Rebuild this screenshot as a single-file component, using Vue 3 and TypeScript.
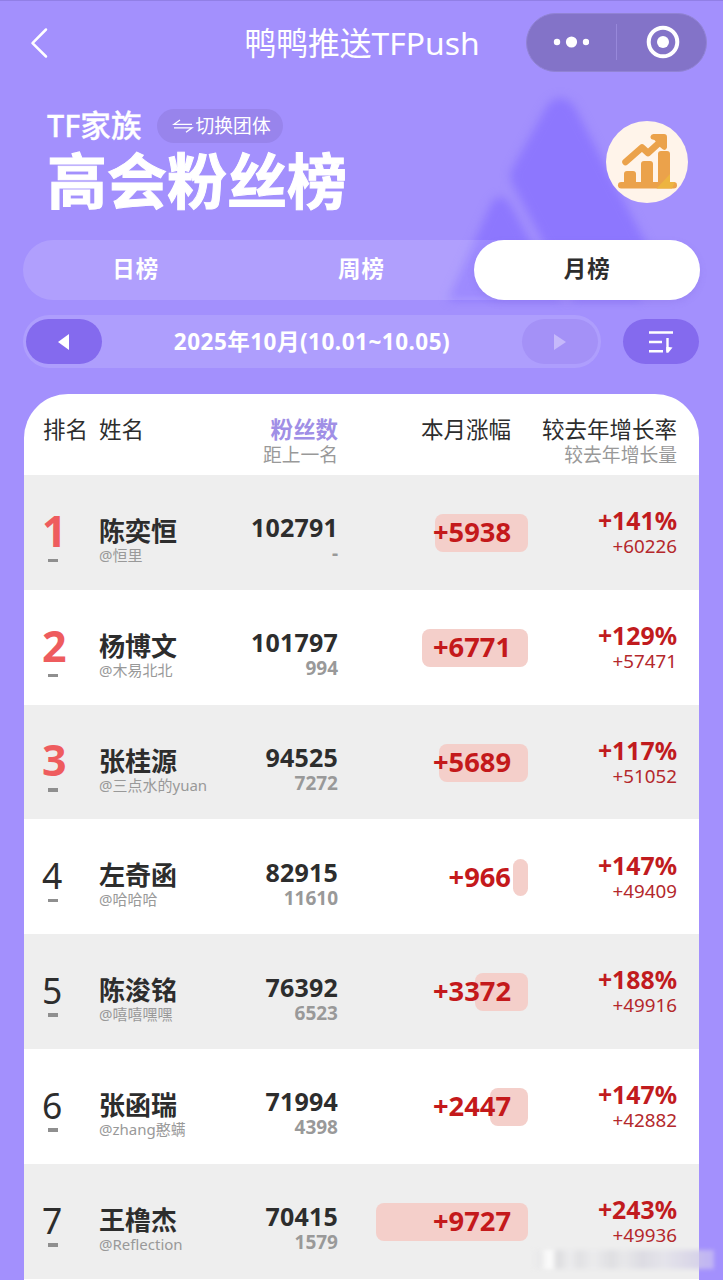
<script setup lang="ts">
interface Row {
  rank: number
  name: string
  handle: string
  fans: number
  gap: string
  growth: number
  rate: number
  delta: number
}

const rows: Row[] = [
  { rank: 1, name: '陈奕恒', handle: '@恒里', fans: 102791, gap: '-', growth: 5938, rate: 141, delta: 60226 },
  { rank: 2, name: '杨博文', handle: '@木易北北', fans: 101797, gap: '994', growth: 6771, rate: 129, delta: 57471 },
  { rank: 3, name: '张桂源', handle: '@三点水的yuan', fans: 94525, gap: '7272', growth: 5689, rate: 117, delta: 51052 },
  { rank: 4, name: '左奇函', handle: '@哈哈哈', fans: 82915, gap: '11610', growth: 966, rate: 147, delta: 49409 },
  { rank: 5, name: '陈浚铭', handle: '@嘻嘻嘿嘿', fans: 76392, gap: '6523', growth: 3372, rate: 188, delta: 49916 },
  { rank: 6, name: '张函瑞', handle: '@zhang憨螨', fans: 71994, gap: '4398', growth: 2447, rate: 147, delta: 42882 },
  { rank: 7, name: '王橹杰', handle: '@Reflection', fans: 70415, gap: '1579', growth: 9727, rate: 243, delta: 49936 },
]

const tabs = ['日榜', '周榜', '月榜']
const activeTab = '月榜'

const FULL_BAR = 152.5
const maxGrowth = Math.max(...rows.map((r) => r.growth))
const barWidth = (growth: number): string => `${((growth / maxGrowth) * FULL_BAR).toFixed(1)}px`
</script>

<template>
  <div class="page">
    <svg class="backdrop" viewBox="0 0 723 400" width="723" height="400">
      <g class="peaks">
        <path d="M547 106Q560 90 574 106L656 262L640 300H574L512 183Q509 176 512 169Z" />
        <path d="M491 204Q500 190 510 204L562 300H448Z" />
      </g>
    </svg>

    <header class="nav">
      <svg class="back" viewBox="0 0 20 32" width="20" height="32">
        <path d="M17 2.5L3.5 16.2L17 29.5" />
      </svg>
      <span class="nav-title">鸭鸭推送TFPush</span>
      <div class="capsule">
        <svg class="dots" viewBox="0 0 36 12" width="36" height="12">
          <circle cx="4" cy="6" r="3.2" /><circle cx="18.5" cy="6" r="5.6" /><circle cx="33" cy="6" r="3.2" />
        </svg>
        <i class="split"></i>
        <svg class="target" viewBox="0 0 34 34" width="34" height="34">
          <circle cx="17" cy="17" r="14.3" class="ring" /><circle cx="17" cy="17" r="6" class="dot" />
        </svg>
      </div>
    </header>

    <section class="hero">
      <div class="hero-text">
        <div class="group-line">
          <span class="group">TF家族</span>
          <span class="switch">
            <svg viewBox="0 0 22 16" width="22" height="16"><path d="M8 2L2 6.3H20M2 9.8H20L14 14.3" /></svg>
            切换团体
          </span>
        </div>
        <h1>高会粉丝榜</h1>
      </div>
      <div class="chart-badge">
        <svg viewBox="0 0 82 82" width="82" height="82">
          <path class="line" d="M19.5 41L36 26.5L42 32L53 22" />
          <path class="head" d="M47.5 13H58Q61 13 61 16V26.5Q60 30 57 28.5L54 26L48.5 19Q44 18.5 44.5 15.5Q45 13 47.5 13Z" />
          <rect x="18" y="50" width="12" height="16" rx="3" />
          <rect x="35" y="40" width="12" height="26" rx="3" />
          <rect x="52" y="30" width="12" height="36" rx="3" />
          <rect x="12" y="61" width="59" height="6.5" rx="3.2" />
          <path class="glow" d="M50.5 67.5L64 53V61H69L66 67.5Z" />
        </svg>
      </div>
    </section>

    <nav class="tabs">
      <span v-for="tab in tabs" :key="tab" class="tab" :class="{ active: tab === activeTab }">{{ tab }}</span>
    </nav>

    <div class="period-line">
      <div class="period">
        <span class="pill">
          <svg viewBox="0 0 16 20" width="16" height="20"><path d="M2 10L13 2V18Z" /></svg>
        </span>
        <span class="range">2025年10月(10.01~10.05)</span>
        <span class="pill disabled">
          <svg viewBox="0 0 16 20" width="16" height="20"><path d="M14 10L2 2V18Z" /></svg>
        </span>
      </div>
      <span class="pill sort">
        <svg viewBox="0 0 26 24" width="26" height="24">
          <path d="M1 2.5H25M1 12H14M1 21.2H15M19.5 8V21.5" />
          <path class="hook" d="M18.3 22.7V17H20.7L24.5 17.5L20.3 22.7Z" />
        </svg>
      </span>
    </div>

    <main class="card">
      <div class="thead">
        <div>排名</div>
        <div>姓名</div>
        <div class="right"><b class="sorted">粉丝数</b><small>距上一名</small></div>
        <div class="right growth-head">本月涨幅</div>
        <div class="right">较去年增长率<small>较去年增长量</small></div>
      </div>
      <div v-for="row in rows" :key="row.rank" class="row">
        <div class="rank" :class="{ top: row.rank <= 3 }">
          <span>{{ row.rank }}</span><i></i>
        </div>
        <div class="who">
          <div class="name">{{ row.name }}</div>
          <div class="handle">{{ row.handle }}</div>
        </div>
        <div class="fans">
          <div class="count">{{ row.fans }}</div>
          <div class="gap">{{ row.gap }}</div>
        </div>
        <div class="growth">
          <i class="bar" :style="{ width: barWidth(row.growth) }"></i>
          <span>+{{ row.growth }}</span>
        </div>
        <div class="yoy">
          <div class="rate">+{{ row.rate }}%</div>
          <div class="delta">+{{ row.delta }}</div>
        </div>
      </div>
      <div class="marks">
        <span class="mark first">微信公众号:鸭鸭推送TFPush</span>
        <div class="mark-clip"><span class="mark">微信公众号:鸭鸭推送TFPush</span></div>
      </div>
    </main>
    <div class="smear"></div>
  </div>
</template>

<style>
html,
body {
  margin: 0;
  overflow: hidden;
}
</style>

<style scoped>
.page {
  position: relative;
  box-sizing: border-box;
  width: 723px;
  height: 1280px;
  overflow: hidden;
  background: #a390fd;
  border-top: 1px solid #917fe6;
  color: #fff;
  font-family: 'Noto Sans', 'Noto Sans CJK SC', sans-serif;
  white-space: nowrap;
}
.page > * {
  position: relative;
}
.page > .backdrop {
  position: absolute;
  left: 0;
  top: -1px;
}
.peaks {
  fill: #8d77fe;
  filter: blur(5px);
}
svg {
  display: block;
  flex: none;
}

.nav {
  display: grid;
  grid-template-columns: 198px 1fr 197px;
  align-items: center;
  height: 83px;
}
.back {
  margin-left: 29px;
  fill: none;
  stroke: #fff;
  stroke-width: 2.5;
  stroke-linecap: round;
  stroke-linejoin: round;
}
.nav-title {
  justify-self: center;
  margin-top: 1px;
  font-size: 31.8px;
  line-height: 44px;
  font-weight: 400;
}
.capsule {
  display: flex;
  align-items: center;
  box-sizing: border-box;
  width: 181px;
  height: 59px;
  margin-top: -1px;
  padding-left: 26px;
  border: 1px solid #9183d4;
  border-radius: 30px;
  background: #8373c8;
  fill: #fff;
}
.split {
  width: 1px;
  height: 36px;
  margin: 0 29px 0 27px;
  background: #9788da;
}
.ring {
  fill: none;
  stroke: #fff;
  stroke-width: 4;
}

.hero {
  display: flex;
  justify-content: space-between;
  height: 155px;
  padding: 22px 35px 0 47px;
  box-sizing: border-box;
}
.group-line {
  display: flex;
  align-items: center;
  gap: 15px;
  height: 38px;
}
.group {
  font-size: 30.6px;
  font-weight: 500;
  line-height: 38px;
  -webkit-text-stroke: 0.3px #fff;
}
.switch {
  display: flex;
  align-items: center;
  gap: 2px;
  box-sizing: border-box;
  width: 126px;
  height: 34px;
  margin-top: 1px;
  padding-left: 15px;
  border-radius: 17px;
  background: #9884ec;
  font-size: 18.8px;
  line-height: 34px;
}
.switch svg {
  fill: none;
  stroke: #fff;
  stroke-width: 1.3;
}
h1 {
  margin: -1px 0 0;
  font-size: 60px;
  line-height: 76px;
  font-weight: 700;
  -webkit-text-stroke: 1px #fff;
}
.chart-badge {
  width: 82px;
  height: 82px;
  margin-top: 15px;
  border-radius: 50%;
  background: #fff4ea;
  fill: #eba24b;
}
.chart-badge .line {
  fill: none;
  stroke: #eba24b;
  stroke-width: 6.5;
  stroke-linecap: round;
  stroke-linejoin: round;
}
.chart-badge .glow {
  fill: #edb441;
}

.tabs {
  display: grid;
  grid-template-columns: repeat(3, 1fr);
  width: 677px;
  height: 60px;
  margin: 1px 0 0 23px;
  border-radius: 30px;
  background: rgba(255, 255, 255, 0.14);
}
.tab {
  text-align: center;
  font-size: 22.5px;
  font-weight: 600;
  letter-spacing: 1px;
  line-height: 58px;
}
.tab.active {
  border-radius: 30px;
  background: #fff;
  color: #2d2d2d;
  box-shadow: 0 3px 6px rgba(130, 108, 225, 0.25);
}

.period-line {
  display: flex;
  align-items: center;
  justify-content: space-between;
  margin: 15px 24px 0 23px;
  height: 53px;
}
.period {
  display: flex;
  align-items: center;
  justify-content: space-between;
  box-sizing: border-box;
  width: 578px;
  height: 53px;
  padding: 0 3px;
  border-radius: 27px;
  background: rgba(255, 255, 255, 0.13);
}
.range {
  font-size: 22.5px;
  font-weight: 700;
  letter-spacing: 0.5px;
  line-height: 50px;
}
.pill {
  display: flex;
  align-items: center;
  justify-content: center;
  width: 76px;
  height: 45px;
  border-radius: 23px;
  background: #846aee;
  fill: #fff;
}
.pill.disabled {
  background: #a491f7;
  fill: #c6b9fb;
}
.sort svg {
  fill: none;
  stroke: #fff;
  stroke-width: 2.4;
}
.sort .hook {
  fill: #fff;
  stroke: none;
}

.card {
  width: 675px;
  height: 900px;
  margin: 26px 0 0 24px;
  border-radius: 44px 44px 0 0;
  background: #fff;
  color: #2d2d2d;
  overflow: hidden;
}
.thead,
.row {
  display: grid;
  grid-template-columns: 56px 122px 117px 190px 149px;
  box-sizing: border-box;
  padding-left: 19px;
}
.thead {
  height: 81px;
  padding-top: 22px;
  font-size: 22.5px;
  line-height: 28px;
}
.thead b,
.thead small {
  display: block;
}
.thead small {
  color: #999;
  font-size: 18.8px;
  line-height: 22px;
}
.sorted {
  color: #a08fe6;
}
.right {
  text-align: right;
}
.growth-head {
  padding-right: 17px;
}
.row {
  height: 114.8px;
}
.row:nth-child(even) {
  background: #eee;
}
.rank {
  padding-top: 30.8px;
}
.rank span {
  display: block;
  font-size: 35.5px;
  line-height: 50px;
  margin-left: -1px;
}
.rank i {
  display: block;
  width: 10px;
  height: 3.5px;
  margin: -1.5px 0 0 5px;
  background: #8f8f8f;
}
.rank.top span {
  color: #ee5c5e;
  font-size: 43px;
  font-weight: 700;
}
.rank.top i {
  margin-top: 3px;
}
.who {
  padding-top: 40px;
}
.name {
  font-size: 26px;
  font-weight: 700;
  line-height: 32px;
}
.handle {
  color: #999;
  font-size: 15px;
  line-height: 17px;
}
.fans {
  padding-top: 37.4px;
  text-align: right;
  font-weight: 700;
}
.count {
  font-size: 25px;
  line-height: 30px;
  letter-spacing: 0.2px;
}
.gap {
  color: #999;
  font-size: 19px;
  line-height: 22px;
}
.growth {
  display: grid;
  height: 37.7px;
  margin-top: 39.3px;
  justify-items: end;
}
.growth > * {
  grid-area: 1 / 1;
}
.bar {
  height: 37.7px;
  border-radius: 8px;
  background: #f4cfca;
}
.growth span {
  padding-right: 17px;
  color: #c4191b;
  font-size: 27.3px;
  font-weight: 700;
  line-height: 35px;
  z-index: 1;
}
.yoy {
  padding-top: 32.3px;
  text-align: right;
}
.rate {
  color: #c11b1e;
  font-size: 24.8px;
  font-weight: 700;
  line-height: 26px;
}
.delta {
  color: #b4282c;
  font-size: 18.8px;
  line-height: 26px;
}

.marks {
  position: absolute;
  inset: 0;
  pointer-events: none;
}
.mark {
  position: absolute;
  left: 159px;
  bottom: 0;
  font-size: 32px;
  line-height: 40px;
  color: rgba(0, 0, 0, 0.022);
  transform: rotate(-9.3deg);
  transform-origin: 0 100%;
}
.mark.first {
  top: 173px;
  bottom: auto;
}
.mark-clip {
  position: absolute;
  left: 0;
  top: 390px;
  width: 675px;
  height: 93px;
  overflow: hidden;
}
.mark-clip .mark {
  bottom: -23px;
}

.page > .smear {
  position: absolute;
  left: 534px;
  top: 1249px;
  width: 180px;
  height: 19px;
  background: linear-gradient(90deg, #e9e9ea 0 4%, #fff 7%, #fff 10%, #d6d6d9 13%, #ececee 20%, #dddde0 25%, #ebebed 33%, #dadade 43%, #e6e6e9 50%, #d7d6df 60%, #e2e1ea 72%, #d3cfe6 88%, #c9bff2 100%);
  opacity: 0.75;
  filter: blur(2px);
}
</style>
